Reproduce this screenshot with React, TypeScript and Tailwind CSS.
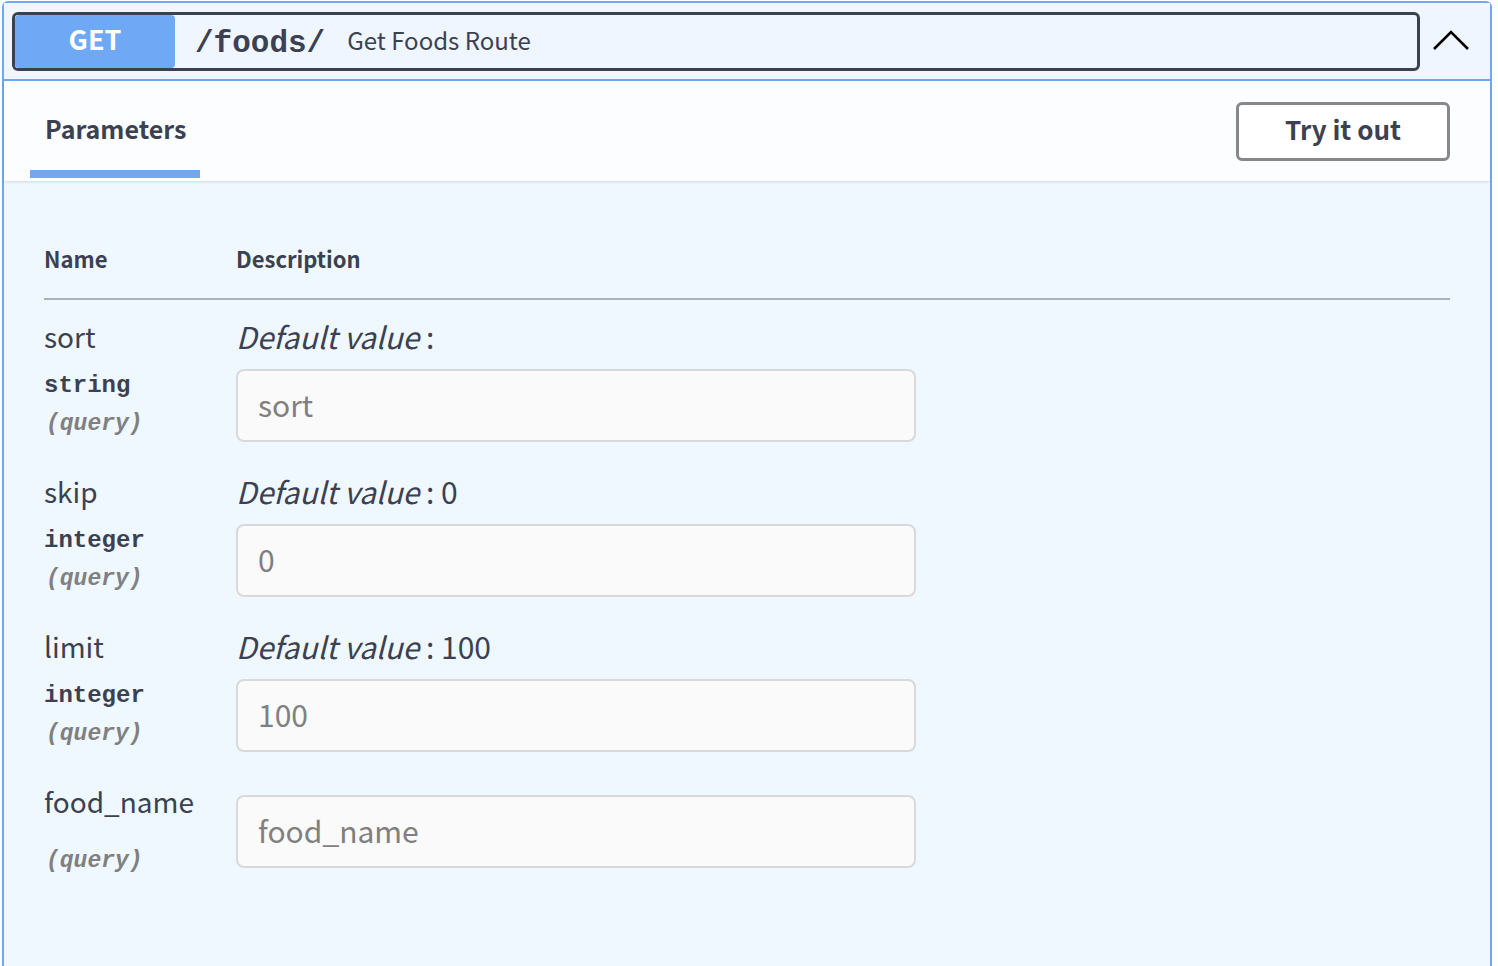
import { ChangeEvent, useState } from "react";

type Param = {
  name: string;
  type?: string;
  location: string;
  defaultValue?: string;
  placeholder: string;
};

const params: Param[] = [
  { name: "sort", type: "string", location: "query", defaultValue: "", placeholder: "sort" },
  { name: "skip", type: "integer", location: "query", defaultValue: "0", placeholder: "0" },
  { name: "limit", type: "integer", location: "query", defaultValue: "100", placeholder: "100" },
  { name: "food_name", location: "query", placeholder: "food_name" },
];

const sans = "font-['Noto_Sans_CJK_KR','Noto_Sans',sans-serif]";
const mono = "font-['Liberation_Mono','Courier_New',monospace]";

function ParamRow({ p }: { p: Param }) {
  const [value, setValue] = useState("");
  return (
    <div className="flex pt-[16px] pb-[13px]">
      {/* 왼쪽: 이름 / 타입 / 위치 */}
      <div className="w-[192px] shrink-0">
        <div className="h-[40px] text-[28px] leading-[40px] text-[#3b4151]">{p.name}</div>
        <div className={`pt-[16px] text-[24px] font-bold leading-[28px] text-[#3b4151] ${mono}`}>
          {p.type}
        </div>
        <div className={`mt-[10px] pl-[2px] text-[23px] font-bold italic leading-[28px] text-[#808080] ${mono}`}>
          ({p.location})
        </div>
      </div>

      {/* 오른쪽: 기본값 + 입력칸 */}
      <div className="flex-1">
        {p.defaultValue !== undefined && (
          <div className="h-[40px] text-[30px] leading-[40px] text-[#3b4151]">
            <i>Default value</i> : {p.defaultValue}
          </div>
        )}
        <input
          value={value}
          onChange={(e: ChangeEvent<HTMLInputElement>) => setValue(e.target.value)}
          placeholder={p.placeholder}
          className={`${p.defaultValue !== undefined ? "mt-[13px]" : "mt-[14px]"} box-border block h-[73px] w-[680px] rounded-[8px] border-2 border-[#d9d9d9] bg-[#fafafa] px-[20px] pb-[4px] text-[30px] text-[#3b4151] outline-none placeholder:text-[#808080] ${sans}`}
        />
      </div>
    </div>
  );
}

export default function App() {
  return (
    <div className={`h-[966px] overflow-hidden bg-white pl-[2px] pt-[1px] ${sans}`}>
      <div className="h-[980px] w-[1490px] rounded-t-[6px] border-2 border-[#6fa9f5] bg-[#eff7ff]">
        {/* 헤더 */}
        <div className="flex h-[78px] items-center border-b-2 border-[#6fa9f5] bg-[#eff6ff] pl-[8px] pr-[20px]">
          <div className="flex h-[59px] flex-1 items-center overflow-hidden rounded-[6px] border-[3px] border-[#3b4151]">
            <div className="flex h-full w-[160px] items-center justify-center rounded-[4px] bg-[#6fa9f5] pb-[3px] text-[27px] font-bold text-white">
              GET
            </div>
            <span className={`ml-[20px] mt-[6px] text-[31px] font-bold text-[#3b4151] ${mono}`}>/foods/</span>
            <span className="ml-[22px] mb-[3px] text-[24px] text-[#3b4151]">Get Foods Route</span>
          </div>
          <svg width="38" height="24" viewBox="0 0 38 24" className="ml-[12px] mb-[2px]">
            <path d="M2 21 L19 4 L36 21" fill="none" stroke="#000" strokeWidth="2.6" />
          </svg>
        </div>

        {/* 탭 바 */}
        <div className="relative flex h-[100px] items-center justify-between bg-[#fbfdff] pl-[26px] pr-[40px] shadow-[0_1px_3px_rgba(0,0,0,0.12)]">
          <div className="flex h-full flex-col justify-end">
            <div className="px-[15px] pb-[23px] text-[25px] font-bold text-[#3b4151]">Parameters</div>
            <div className="mb-[3px] h-[8px] w-[170px] bg-[#6fa9f5]" />
          </div>
          <button className="h-[59px] w-[214px] rounded-[6px] border-[3px] border-[#888] bg-white pb-[5px] text-[26px] font-bold text-[#3b4151]">
            Try it out
          </button>
        </div>

        {/* 파라미터 표 */}
        <div className="px-[40px]">
          <div className="flex h-[119px] items-end border-b-2 border-[#aab1bc] pb-[23px] text-[22px] font-bold text-[#3b4151]">
            <div className="w-[192px]">Name</div>
            <div>Description</div>
          </div>
          {params.map((p) => (
            <ParamRow key={p.name} p={p} />
          ))}
        </div>
      </div>
    </div>
  );
}
